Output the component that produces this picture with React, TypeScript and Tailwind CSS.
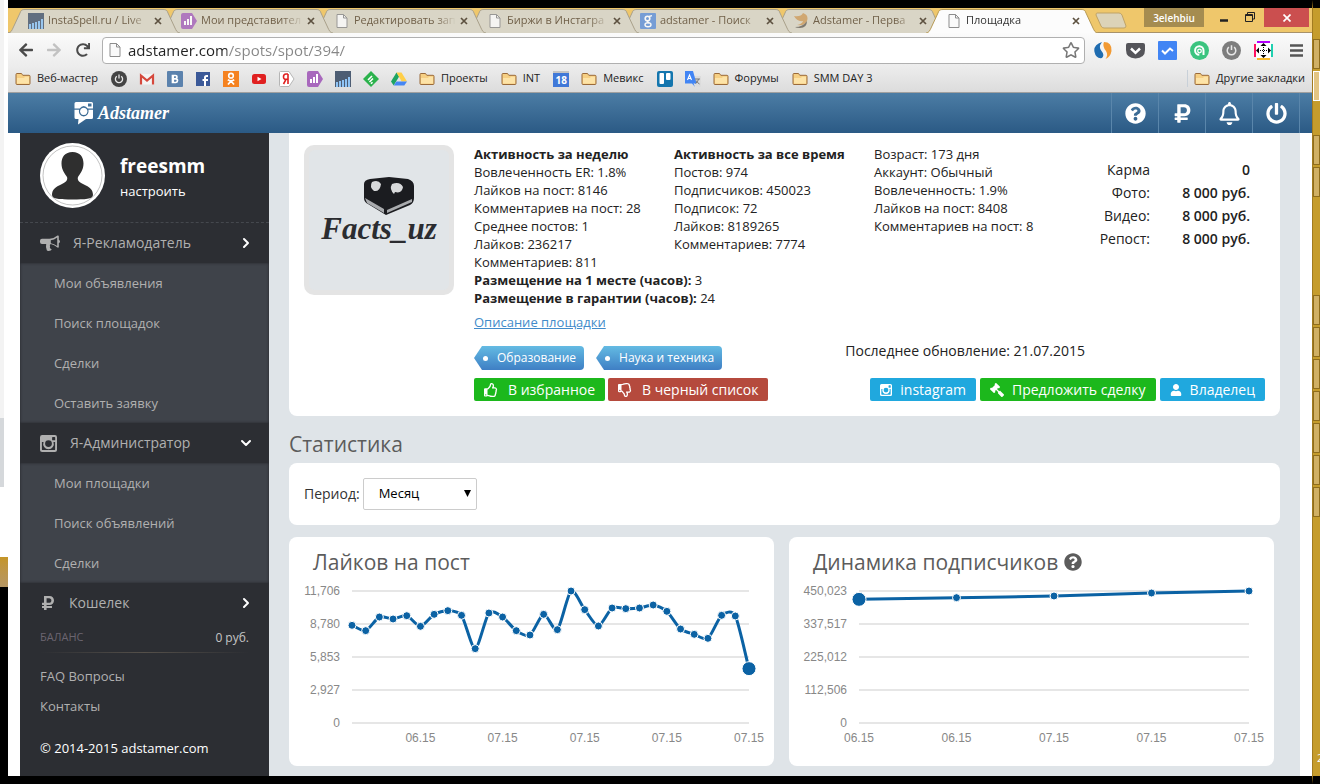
import React from "react";
import {
  FaQuestionCircle,
  FaRubleSign,
  FaRegBell,
  FaPowerOff,
  FaRegThumbsUp,
  FaRegThumbsDown,
  FaGavel,
  FaUser,
  FaArrowLeft,
  FaArrowRight,
  FaRedo,
  FaRegStar,
} from "react-icons/fa";
import { ChevronDown, ChevronRight } from "lucide-react";

/* ---------- small icons ---------- */

const DocIcon = () => (
  <svg viewBox="0 0 16 16" className="size-4 shrink-0">
    <path d="M3 1.500h6.500l3.500 3.500v9.500h-10z" fill="#fafafa" stroke="#8d8d8d" />
    <path d="M9.500 1.500v3.500h3.500" fill="none" stroke="#8d8d8d" />
  </svg>
);

const FolderIcon = () => (
  <svg viewBox="0 0 16 16" className="size-4 shrink-0">
    <path
      d="M1 12.500V3.500q0-1 1-1h4q1 0 1.300 1l.5.800H14q1 0 1 1v7.200q0 1-1 1H2q-1 0-1-1z"
      fill="#f6cf83"
      stroke="#9a6a3a"
    />
    <path d="M2 7h7l1-1.300h4v6.800H2z" fill="#fde3a7" />
  </svg>
);

const BarsIcon = () => (
  <svg viewBox="0 0 16 16" className="size-4 shrink-0">
    <rect width="16" height="16" fill="#4d5d73" />
    <path
      d="M1 16v-5h2v5zM4 16v-6h2v6zM7 16v-7h2v7zM10 16v-8h2v8zM13 16V6h2v10z"
      fill="#8fc4f5"
    />
  </svg>
);

const MetrikaIcon = () => (
  <svg viewBox="0 0 16 16" className="size-4 shrink-0">
    <path d="M2 0h9l5 8-5 8H2q-2 0-2-2V2q0-2 2-2z" fill="#a868bd" />
    <path d="M3 12V8h2v4zM6 12V6h2v6zM9 12V3h2v9z" fill="#fff" />
  </svg>
);

const GoogleIcon = () => (
  <svg viewBox="0 0 16 16" className="size-4 shrink-0">
    <rect width="16" height="16" rx="1" fill="#6594d8" />
    <circle cx="7.500" cy="5.500" r="2.300" fill="none" stroke="#fff" strokeWidth="1.600" />
    <ellipse cx="8" cy="11.800" rx="3" ry="2" fill="none" stroke="#fff" strokeWidth="1.400" />
    <path d="M9 3.500l3-.8M7 8l2 2" stroke="#fff" strokeWidth="1.300" />
  </svg>
);

const WingIcon = () => (
  <svg viewBox="0 0 16 16" className="size-4 shrink-0">
    <path d="M1 3q7 1 9-3 6 2 4 8-2 5-10 4 5-1 6-4-6 1-9-5z" fill="#cf9f63" />
    <path d="M2 14q8 0 12-6 0 7-7 7-4 0-5-1z" fill="#6f6a62" />
  </svg>
);

const PowerDot = ({ fill, className }: { fill: string; className: string }) => (
  <svg viewBox="0 0 16 16" className={className}>
    <circle cx="8" cy="8" r="8" fill={fill} />
    <path
      d="M5.800 5.200a3.600 3.600 0 1 0 4.400 0M8 3.500v4"
      fill="none"
      stroke="#e8e8e8"
      strokeWidth="1.300"
    />
  </svg>
);

const GmailIcon = () => (
  <svg viewBox="0 0 16 16" className="size-4 shrink-0">
    <rect x="1" y="3" width="14" height="10.500" fill="#f4f4f4" />
    <path d="M2 13.500V4.500L8 9.500l6-5v9" fill="none" stroke="#d5483c" strokeWidth="2.200" />
  </svg>
);

const VkIcon = () => (
  <svg viewBox="0 0 16 16" className="size-4 shrink-0">
    <rect width="16" height="16" rx="1" fill="#5b82ad" />
    <path
      d="M5.500 4.500h3q1.500 0 1.500 1.600T8.500 7.800h-3zM5.500 7.800h3.300q1.700 0 1.700 1.800t-1.700 1.900H5.500zM6.200 4.500v7"
      fill="none"
      stroke="#fff"
      strokeWidth="1.700"
    />
  </svg>
);

const FacebookIcon = () => (
  <svg viewBox="0 0 16 16" className="size-4 shrink-0">
    <rect x="1" y="1" width="14" height="14" fill="#3b5998" />
    <path d="M13 5h-1.500Q10 5 10 6.500V15M7.500 9H13" fill="none" stroke="#fff" strokeWidth="2" />
  </svg>
);

const OkIcon = () => (
  <svg viewBox="0 0 16 16" className="size-4 shrink-0">
    <rect width="16" height="16" fill="#f58220" />
    <circle cx="8" cy="4.700" r="2.300" fill="none" stroke="#fff" strokeWidth="1.600" />
    <path d="M4.800 8.800q3.200 2 6.400 0M8 10l-3 3.500M8 10l3 3.500" fill="none" stroke="#fff" strokeWidth="1.800" />
  </svg>
);

const YoutubeIcon = () => (
  <svg viewBox="0 0 16 16" className="size-4 shrink-0">
    <rect x="1" y="3" width="14" height="10" rx="2.500" fill="#e02020" />
    <path d="M6.500 5.700v4.600L10.500 8z" fill="#fff" />
  </svg>
);

const YandexIcon = () => (
  <svg viewBox="0 0 16 16" className="size-4 shrink-0">
    <path d="M1.500.5H10l5 7.500-5 7.500H1.500q-1 0-1-1v-13q0-1 1-1z" fill="#fff" stroke="#b5b5b5" />
    <path d="M9 3v10M9 3H7Q4.500 3 4.500 5.700T7 8.300h2M7 8.300L4.500 13" fill="none" stroke="#e02020" strokeWidth="1.600" />
  </svg>
);

const FeedlyIcon = () => (
  <svg viewBox="0 0 16 16" className="size-4 shrink-0">
    <path d="M8 0l8 8-8 8-8-8z" fill="#2bb24c" />
    <path d="M5 9l4-4M6.500 11l3.500-3.500M8 12.700l1.500-1.500" stroke="#fff" strokeWidth="1.600" />
  </svg>
);

const DriveIcon = () => (
  <svg viewBox="0 0 16 16" className="size-4 shrink-0">
    <path d="M5.500 1.500L0 10.500l2.700 4 5.400-9z" fill="#1da462" />
    <path d="M5.500 1.500h5L16 10.500h-5.300z" fill="#ffcf48" />
    <path d="M5.500 10.500H16l-2.700 4H2.700z" fill="#4687f4" />
  </svg>
);

const CalendarIcon = () => (
  <span className="flex size-4 items-center justify-center border-t-2 border-[#c4c4c4] bg-[#3f78d8] text-[10px] leading-3 font-bold text-white">
    18
  </span>
);

const TrelloIcon = () => (
  <svg viewBox="0 0 16 16" className="size-4 shrink-0">
    <rect width="16" height="16" rx="2" fill="#1476ae" />
    <rect x="2.500" y="2" width="4.500" height="11" rx="1" fill="#fff" />
    <rect x="9" y="2" width="4.500" height="7" rx="1" fill="#fff" />
  </svg>
);

const TranslateIcon = () => (
  <svg viewBox="0 0 16 16" className="size-4 shrink-0">
    <path d="M7 5h9v11h-5z" fill="#dcdcdc" />
    <path d="M0 0h8l3.500 12.500H8.500L10 16l-3-3.500H0z" fill="#4285f4" />
    <path d="M2.500 9L4.500 4l2 5M3 7.500h3" fill="none" stroke="#fff" strokeWidth="1.100" />
    <path d="M10 8h5M13.500 8q-.5 3-3 4.500M11 9.500q1 2 3.500 3.500" fill="none" stroke="#777" />
  </svg>
);

// old square instagram camera
const CameraIcon = ({ className }: { className: string }) => (
  <svg viewBox="0 0 16 16" className={className} fill="currentColor">
    <path
      fillRule="evenodd"
      d="M2 0h12q2 0 2 2v12q0 2-2 2H2q-2 0-2-2V2q0-2 2-2zM12 1.800q-.6 0-.6.600v2q0 .6.6.600h1.700q.6 0 .6-.6v-2q0-.6-.6-.6zM1.800 6.700v6.700q0 .8.8.800h10.800q.8 0 .8-.8V6.700h-1.500a5 5 0 1 1-9.400 0zM8 4.900a3.200 3.200 0 1 0 0 6.400 3.200 3.200 0 1 0 0-6.400z"
    />
  </svg>
);

const BullhornIcon = () => (
  <svg viewBox="0 0 20 17" className="h-[17px] w-5 shrink-0" fill="currentColor">
    <path
      fillRule="evenodd"
      d="M2 3.800h7.500Q14 3.600 17.500.5q1.300-.4 1.300.8v3.500q1.200.4 1.200 1.700t-1.200 1.700v3.600q0 1.200-1.300.8-3.300-3-6.800-3.500-1.400.8-.7 2 .3.800-.2 1.500.6 1.300 2 2-.8 1.500-3.300 1.400-1.500-.1-1.700-.8Q5.500 12 6.200 9.100H2Q0 9.100 0 7.100V5.800q0-2 2-2zM10.800 5.200v3Q14 8.700 17.200 10.900V2.400Q14 4.800 10.800 5.200z"
    />
  </svg>
);

/* ---------- browser chrome ---------- */

interface BrowserTab {
  title: string;
  icon: React.ReactNode;
  layer: string;
}

const tabs: BrowserTab[] = [
  { title: "InstaSpell.ru / Live", icon: <BarsIcon />, layer: "z-6" },
  { title: "Мои представител", icon: <MetrikaIcon />, layer: "z-5" },
  { title: "Редактировать зап", icon: <DocIcon />, layer: "z-4" },
  { title: "Биржи в Инстагра", icon: <DocIcon />, layer: "z-3" },
  { title: "adstamer - Поиск", icon: <GoogleIcon />, layer: "z-2" },
  { title: "Adstamer - Перва", icon: <WingIcon />, layer: "z-1" },
  { title: "Площадка", icon: <DocIcon />, layer: "z-7" },
];

const Tab = ({ tab, active }: { tab: BrowserTab; active: boolean }) => (
  <div
    className={`relative -mr-[19px] flex h-[25px] w-[172px] shrink-0 items-center pl-5 ${tab.layer}`}
  >
    <svg viewBox="0 0 172 25" className="absolute inset-0 size-full">
      <path
        d="M0 25C3 25 4 22 5 20L12 5C13 2 14 1.500 17 1.500H155C158 1.500 159 2 160 5L167 20C168 22 169 25 172 25"
        fill={active ? "#fcfcfc" : "#d9d5c6"}
        stroke={active ? "#b79a55" : "#a9a08a"}
      />
    </svg>
    <a
      href="#"
      className={`relative flex min-w-0 items-center gap-1 text-[11px] ${
        active ? "text-[#333]" : "text-[#71614a] [&_svg]:opacity-85"
      }`}
    >
      {tab.icon}
      <span className="w-[102px] whitespace-nowrap [mask-image:linear-gradient(to_right,black_80%,transparent)]">
        {tab.title}
      </span>
    </a>
    <button aria-label="Закрыть вкладку" className="relative p-1">
      <svg viewBox="0 0 8 8" className="size-2">
        <path d="M1 1l6 6M7 1L1 7" stroke="#5d5140" strokeWidth="1.700" />
      </svg>
    </button>
  </div>
);

const WindowTitleBar = () => (
  <div className="flex h-[25px] items-start border-b border-[#a8926a] bg-[#efc76b]">
    {tabs.map((tab, i) => (
      <Tab key={tab.title} tab={tab} active={i === tabs.length - 1} />
    ))}
    <button aria-label="Новая вкладка" className="mt-1 ml-4">
      <svg viewBox="0 0 32 17" className="h-[17px] w-8">
        <path
          d="M2 1H24Q26 1 27 3L31 14Q31 16 29 16H9Q7 16 6 14L1 3Q1 1 2 1z"
          fill="#dcd3b8"
          stroke="#bfa367"
        />
      </svg>
    </button>
    <div className="ml-auto flex items-start">
      <button className="h-[19px] w-[60px] bg-[#a58c50] text-[10px] leading-[18px] font-semibold text-white">
        3elehbiu
      </button>
      <button aria-label="Свернуть" className="ml-3 p-1">
        <svg viewBox="0 0 8 12" className="h-3 w-2">
          <path d="M0 8.500h8" stroke="#222" strokeWidth="2.500" />
        </svg>
      </button>
      <button aria-label="Развернуть" className="ml-[13px] py-1">
        <svg viewBox="0 0 10 10" className="size-[10px]" fill="none" stroke="#222">
          <path d="M2.500 2V.5h7v6.500H8M.500 2.500h7v7h-7zM.5 3.500h7" />
        </svg>
      </button>
      <button
        aria-label="Закрыть"
        className="mr-[3px] ml-[9px] flex h-[19px] w-[45px] items-center justify-center bg-[#cb4f4f]"
      >
        <svg viewBox="0 0 8 8" className="size-2">
          <path d="M.5.500l7 7M7.500.5l-7 7" stroke="#fff" strokeWidth="1.700" />
        </svg>
      </button>
    </div>
  </div>
);

const Toolbar = () => (
  <div className="flex h-[34px] items-center bg-linear-to-b from-[#fbfbfb] to-[#ececec] pr-[5px] pl-[10px]">
    <button aria-label="Назад" className="text-[#4a4a4a]">
      <FaArrowLeft size={16} />
    </button>
    <button aria-label="Вперёд" className="ml-3 text-[#c2c2c2]">
      <FaArrowRight size={16} />
    </button>
    <button aria-label="Обновить" className="ml-[14px] text-[#4a4a4a]">
      <FaRedo size={14} />
    </button>
    <div className="ml-3 flex h-[27px] flex-1 items-center rounded-sm border border-[#b0b0b0] bg-white px-1">
      <DocIcon />
      <label htmlFor="address" className="sr-only">
        Адрес
      </label>
      <div className="ml-[5px] flex flex-1 text-[15px] leading-5">
        <input
          id="address"
          defaultValue="adstamer.com/spots/spot/394/"
          className="w-full bg-transparent bg-linear-to-r from-[#222] from-[99px] to-[#868686] to-[99px] bg-clip-text text-transparent outline-none"
        />
      </div>
      <button aria-label="В закладки" className="text-[#777]">
        <FaRegStar size={18} />
      </button>
    </div>
    <div className="ml-[9px] flex items-center gap-[13px]">
      <svg viewBox="0 0 19 19" className="size-[19px]">
        <path d="M8 1Q-1 4 .5 11T8 17q3-3-.5-7T8 1z" fill="#1f6cb0" />
        <path d="M10 1q8 0 7.500 9-1 6-6 8 3-4 .5-8-4-5-2-9z" fill="#f29a33" />
      </svg>
      <svg viewBox="0 0 19 19" className="size-[19px]">
        <path d="M2 2h15q2 0 2 2v5q0 8-9.500 8.500Q0 17 0 9V4q0-2 2-2z" fill="#55555a" />
        <path d="M5 7.500l4.500 4.300L14 7.500" fill="none" stroke="#fff" strokeWidth="2.500" />
      </svg>
      <svg viewBox="0 0 19 19" className="size-[19px]">
        <rect width="19" height="19" rx="1" fill="#4285f4" />
        <path d="M4 9.500l3 3 5-5 3 2.500" fill="none" stroke="#fff" strokeWidth="2" />
      </svg>
      <svg viewBox="0 0 19 19" className="size-[19px]">
        <circle cx="9.500" cy="9.500" r="9.500" fill="#3bc47f" />
        <path d="M13.500 14V9.500a4.200 4.200 0 1 0-4.200 4.200" fill="none" stroke="#fff" strokeWidth="2" />
        <circle cx="9.500" cy="10" r="1.800" fill="none" stroke="#fff" strokeWidth="1.300" />
      </svg>
      <PowerDot fill="#7d7d7d" className="size-[19px]" />
      <svg viewBox="0 0 19 19" className="size-[19px]">
        <rect x="2" y="2" width="15" height="15" fill="#fff" />
        <path d="M3 1h13" stroke="#b400ff" strokeWidth="2" />
        <path d="M3 18h13" stroke="#f6b92b" strokeWidth="2" />
        <path d="M1 3v13" stroke="#ff1060" strokeWidth="2" />
        <path d="M18 3v13" stroke="#1fd0b0" strokeWidth="2" />
        <path d="M9.500 4v11M4 9.500h11" stroke="#000" strokeDasharray="1 1" />
        <path d="M9.500 2l3 3h-6zM9.500 17l3-3h-6zM2 9.500l3-3v6zM17 9.500l-3-3v6z" />
      </svg>
      <button aria-label="Меню">
        <svg viewBox="0 0 13 13" className="mx-1 size-[13px]">
          <path d="M0 1.500h13M0 6.500h13M0 11.500h13" stroke="#555" strokeWidth="2.600" />
        </svg>
      </button>
    </div>
  </div>
);

const bookmarks: { title: string; label?: string; icon: React.ReactNode }[] = [
  { title: "Веб-мастер", label: "Веб-мастер", icon: <FolderIcon /> },
  { title: "Power", icon: <PowerDot fill="#444" className="size-4" /> },
  { title: "Gmail", icon: <GmailIcon /> },
  { title: "ВКонтакте", icon: <VkIcon /> },
  { title: "Facebook", icon: <FacebookIcon /> },
  { title: "Одноклассники", icon: <OkIcon /> },
  { title: "YouTube", icon: <YoutubeIcon /> },
  { title: "Яндекс", icon: <YandexIcon /> },
  { title: "Метрика", icon: <MetrikaIcon /> },
  { title: "InstaSpell", icon: <BarsIcon /> },
  { title: "Feedly", icon: <FeedlyIcon /> },
  { title: "Диск", icon: <DriveIcon /> },
  { title: "Проекты", label: "Проекты", icon: <FolderIcon /> },
  { title: "INT", label: "INT", icon: <FolderIcon /> },
  { title: "Календарь", icon: <CalendarIcon /> },
  { title: "Мевикс", label: "Мевикс", icon: <FolderIcon /> },
  { title: "Trello", icon: <TrelloIcon /> },
  { title: "Переводчик", icon: <TranslateIcon /> },
  { title: "Форумы", label: "Форумы", icon: <FolderIcon /> },
  { title: "SMM DAY 3", label: "SMM DAY 3", icon: <FolderIcon /> },
];

const BookmarksBar = () => (
  <div className="flex h-[26px] items-center gap-3 border-b border-[#a0a0a0] bg-linear-to-b from-[#ececec] to-[#dcdcdc] px-[7px] pb-[2px] text-[11px] whitespace-nowrap text-[#222]">
    {bookmarks.map((b) => (
      <a key={b.title} href="#" aria-label={b.title} className="flex items-center gap-[6px]">
        {b.icon}
        {b.label && <span className="pr-px">{b.label}</span>}
      </a>
    ))}
    <a href="#" className="ml-auto flex items-center gap-[6px] border-l border-[#c8d0d8] pl-[6px]">
      <FolderIcon />
      Другие закладки
    </a>
  </div>
);

/* ---------- site ---------- */

const headerLinks = [
  { title: "Помощь", icon: <FaQuestionCircle size={21} /> },
  { title: "Кошелек", icon: <FaRubleSign size={21} /> },
  { title: "Уведомления", icon: <FaRegBell size={23} /> },
  { title: "Выход", icon: <FaPowerOff size={21} /> },
];

const SiteHeader = () => (
  <header className="flex h-10 items-stretch bg-linear-to-b from-[#4c7da5] to-[#2b5a85] pr-3">
    <a href="#" className="ml-[66px] flex items-center gap-1 text-white">
      <svg viewBox="0 0 20 24" className="h-6 w-5">
        <path
          fillRule="evenodd"
          fill="#fff"
          d="M2 1h15.500q1.500 0 1.500 1.500v14q0 1.500-1.500 1.500H12l-8 5.500.500-5.500H2Q.500 18 .5 16.500v-14Q.5 1 2 1zM14 2.500v3h3.500v-3zM.5 7.500v1.300H5q-1 6 4.700 6.700 5.600-.700 4.800-6.700H19V7.500h-5.200Q12 5 9.700 5T5.700 7.500zM9.700 6.700a3.700 3.700 0 1 0 .1 0z"
        />
      </svg>
      <span className="font-[Liberation_Serif,serif] text-lg font-bold italic">Adstamer</span>
    </a>
    <nav className="ml-auto flex border-r border-[#5a86ab]">
      {headerLinks.map((link) => (
        <a
          key={link.title}
          href="#"
          aria-label={link.title}
          className="flex w-[47px] items-center justify-center border-l border-[#5a86ab] text-white"
        >
          {link.icon}
        </a>
      ))}
    </nav>
  </header>
);

interface MenuSectionProps {
  title: string;
  icon: React.ReactNode;
  open?: boolean;
  items: string[];
}

const MenuSection: React.FC<MenuSectionProps> = ({ title, icon, open, items }) => (
  <div>
    <button className="flex h-10 w-full items-center gap-[13px] pr-[15px] pl-5 text-sm">
      {icon}
      {title}
      <span className="ml-auto text-white">
        {open ? (
          <ChevronDown size={16} strokeWidth={3} />
        ) : (
          <ChevronRight size={16} strokeWidth={3} />
        )}
      </span>
    </button>
    {items.length > 0 && (
      <ul className="bg-[#3f434a] shadow-[inset_0_0_3px_#25272b]">
        {items.map((item) => (
          <li key={item}>
            <a href="#" className="block h-10 pl-[34px] text-[13px] leading-10">
              {item}
            </a>
          </li>
        ))}
      </ul>
    )}
  </div>
);

const Sidebar = () => (
  <aside className="w-[249px] shrink-0 bg-[#2c2e33] text-[#b0b0b0]">
    <div className="flex h-[90px] items-center gap-[15px] border-b border-dashed border-[#45484e] px-5 pb-1 text-white">
      <svg viewBox="0 0 65 65" className="size-[65px]">
        <circle cx="32.500" cy="32.500" r="32.500" fill="#fff" />
        <circle cx="32.500" cy="32.500" r="29.500" fill="none" stroke="#999" strokeWidth=".6" />
        <path
          d="M32.500 9C25 9 21.500 14 21.500 20.500 21.500 27 25 31 27 34 28 37 26 39 22 41 15 44 12 47 12 52 12 56 20 56.500 32.500 56.500S53 56 53 52C53 47 50 44 43 41 39 39 37 37 38 34 40 31 43.500 27 43.500 20.500 43.500 14 40 9 32.500 9z"
          fill="#2f2f2f"
        />
      </svg>
      <div className="pt-1">
        <div className="text-[19px] leading-6 font-bold">freesmm</div>
        <a href="#" className="text-[13px] leading-5">
          настроить
        </a>
      </div>
    </div>
    <MenuSection
      title="Я-Рекламодатель"
      icon={<BullhornIcon />}
      items={["Мои объявления", "Поиск площадок", "Сделки", "Оставить заявку"]}
    />
    <MenuSection
      title="Я-Администратор"
      icon={<CameraIcon className="size-[17px]" />}
      open
      items={["Мои площадки", "Поиск объявлений", "Сделки"]}
    />
    <MenuSection title="Кошелек" icon={<FaRubleSign size={16} />} items={[]} />
    <div className="px-5">
      <div className="flex h-[29px] items-center justify-between">
        <span className="text-[11px] text-[#6b6570]">БАЛАНС</span>
        <span className="text-xs text-[#c5c5c5]">0 руб.</span>
      </div>
      <div className="h-px bg-linear-to-r from-transparent via-[#55504a] to-transparent" />
    </div>
    <div className="flex flex-col px-5 pt-2 text-[13px] leading-[30px]">
      <a href="#">FAQ Вопросы</a>
      <a href="#">Контакты</a>
      <p className="mt-3 text-white">© 2014-2015 adstamer.com</p>
    </div>
  </aside>
);

const weekStats = [
  "Вовлеченность ER: 1.8%",
  "Лайков на пост: 8146",
  "Комментариев на пост: 28",
  "Среднее постов: 1",
  "Лайков: 236217",
  "Комментариев: 811",
];

const totalStats = [
  "Постов: 974",
  "Подписчиков: 450023",
  "Подписок: 72",
  "Лайков: 8189265",
  "Комментариев: 7774",
];

const accountStats = [
  "Возраст: 173 дня",
  "Аккаунт: Обычный",
  "Вовлеченность: 1.9%",
  "Лайков на пост: 8408",
  "Комментариев на пост: 8",
];

const prices = [
  ["Карма", "0"],
  ["Фото:", "8 000 руб."],
  ["Видео:", "8 000 руб."],
  ["Репост:", "8 000 руб."],
];

const StatColumn = ({ title, lines }: { title?: string; lines: string[] }) => (
  <div className="w-[200px]">
    {title && <h3 className="font-bold whitespace-nowrap">{title}</h3>}
    {lines.map((line) => (
      <p key={line}>{line}</p>
    ))}
  </div>
);

const SpotAvatar = () => (
  <svg viewBox="0 0 150 150" className="size-[150px] shrink-0">
    <rect width="150" height="150" rx="10" fill="#e4e4e4" />
    <rect x="5" y="5" width="140" height="140" rx="6" fill="#e1e5e8" />
    <path d="M60 39Q60 35 66 34L85 32 104 34Q110 36 110 41V53Q110 58 106 60L82 70 64 59Q60 57 60 53z" fill="#1b1c20" />
    <path d="M61 53L80 64V68L63 58zM83 65L108 54V57L83 68z" fill="#a9abae" />
    <path d="M68 37q6-3 9 2-1 8-7 7-5-4-2-9zM88 39q8-3 11 3-1 7-8 5l-1 2q-5-5-2-10z" fill="#d8d9db" />
    <text
      x="75"
      y="94"
      textAnchor="middle"
      className="font-[Liberation_Serif,serif] text-[31px] font-bold italic"
      fill="#2b2c30"
    >
      Facts_uz
    </text>
  </svg>
);

const Tag = ({ children }: { children: React.ReactNode }) => (
  <a
    href="#"
    className="flex h-6 items-center gap-[9px] rounded-sm bg-linear-to-b from-[#64bbe3] to-[#3f7fc4] pr-2 pl-[9px] text-xs text-white [clip-path:polygon(8px_0,100%_0,100%_100%,8px_100%,0_50%)]"
  >
    <span className="size-[5px] rounded-full bg-white" />
    {children}
  </a>
);

const ActionButton = ({
  color,
  icon,
  children,
}: {
  color: string;
  icon: React.ReactNode;
  children: React.ReactNode;
}) => (
  <button
    className={`flex h-[23px] items-center gap-2 rounded-xs px-[10px] text-sm whitespace-nowrap text-white ${color}`}
  >
    {icon}
    {children}
  </button>
);

const SpotPanel = () => (
  <section className="flex gap-5 rounded-b-lg bg-white px-[15px] pt-3 pb-[15px] text-[#222]">
    <SpotAvatar />
    <div className="min-w-0 flex-1">
      <div className="flex text-[13px] leading-[18px]">
        <StatColumn title="Активность за неделю" lines={weekStats} />
        <StatColumn title="Активность за все время" lines={totalStats} />
        <StatColumn lines={accountStats} />
        <table className="mt-[13px] mr-[15px] ml-auto h-fit text-sm leading-[23px] whitespace-nowrap">
          <tbody>
            {prices.map(([label, value]) => (
              <tr key={label} className="text-right">
                <th className="font-normal">{label}</th>
                <td className="w-[100px] font-semibold">{value}</td>
              </tr>
            ))}
          </tbody>
        </table>
      </div>
      <div className="text-[13px] leading-[18px]">
        <p>
          <b>Размещение на 1 месте (часов):</b> 3
        </p>
        <p>
          <b>Размещение в гарантии (часов):</b> 24
        </p>
        <a href="#" className="mt-[6px] inline-block text-[#428bca] underline">
          Описание площадки
        </a>
      </div>
      <div className="mt-[15px] flex justify-between">
        <div className="flex gap-3">
          <Tag>Образование</Tag>
          <Tag>Наука и техника</Tag>
        </div>
        <p className="mr-[180px] text-sm leading-[10px]">Последнее обновление: 21.07.2015</p>
      </div>
      <div className="mt-2 flex justify-between">
        <div className="flex gap-[3px]">
          <ActionButton color="bg-[#1cb81c]" icon={<FaRegThumbsUp className="mr-[2px]" />}>
            В избранное
          </ActionButton>
          <ActionButton color="bg-[#b54a3d]" icon={<FaRegThumbsDown className="mr-[2px]" />}>
            В черный список
          </ActionButton>
        </div>
        <div className="flex gap-1">
          <ActionButton color="bg-[#20a8de]" icon={<CameraIcon className="size-3" />}>
            instagram
          </ActionButton>
          <ActionButton color="bg-[#1cb81c]" icon={<FaGavel className="-scale-x-100" />}>
            Предложить сделку
          </ActionButton>
          <ActionButton color="bg-[#20a8de]" icon={<FaUser size={12} />}>
            Владелец
          </ActionButton>
        </div>
      </div>
    </div>
  </section>
);

/* ---------- charts ---------- */

interface LineChartProps {
  values: number[];
  max: number;
  yLabels: string[];
  xLabels: { index: number; text: string }[];
  left: number;
  highlighted: number;
}

const likes = [
  8661, 8188, 9400, 9223, 9518, 8572, 9636, 9962, 9548, 6592, 9755, 9400, 8188,
  7804, 9636, 8277, 11706, 10051, 8602, 10198, 10139, 10198, 10464, 9903, 8336,
  7863, 7508, 9548, 9489, 4818,
];

const followers = [421606, 427286, 432970, 443200, 450023];

const LineChart: React.FC<LineChartProps> = ({
  values,
  max,
  yLabels,
  xLabels,
  left,
  highlighted,
}) => {
  const right = 450;
  const top = 9;
  const height = 132;
  const step = (right - left) / (values.length - 1);
  const pts = values.map((v, i) => ({
    x: left + i * step,
    y: top + height - (v / max) * height,
  }));

  const slope = (i: number) => {
    const a = pts[Math.max(i - 1, 0)];
    const b = pts[Math.min(i + 1, pts.length - 1)];
    return (b.y - a.y) / (b.x - a.x);
  };

  let path = `M${pts[0].x} ${pts[0].y}`;
  for (let i = 1; i < pts.length; i++) {
    const p = pts[i - 1];
    const q = pts[i];
    const ix = step / 4;
    path += `C${p.x + ix} ${p.y + ix * slope(i - 1)} ${q.x - ix} ${q.y - ix * slope(i)} ${q.x} ${q.y}`;
  }

  return (
    <svg
      viewBox="0 0 465 170"
      className="w-full overflow-visible font-[Liberation_Sans,Arial,sans-serif] text-xs"
    >
      {yLabels.map((label, i) => (
        <g key={label}>
          <path d={`M${left} ${top + i * 33}H${right}`} stroke="#e6e6e6" strokeWidth="2" />
          <text x={left - 12} y={top + i * 33 + 4} textAnchor="end" fill="#888">
            {label}
          </text>
        </g>
      ))}
      {xLabels.map(({ index, text }) => (
        <text key={index} x={pts[index].x} y="160" textAnchor="middle" fill="#888">
          {text}
        </text>
      ))}
      <path d={path} fill="none" stroke="#0b62a4" strokeWidth="3" />
      {pts.map((p, i) => (
        <circle
          key={i}
          cx={p.x}
          cy={p.y}
          r={i === highlighted ? 7 : 4}
          fill="#0b62a4"
          stroke="#fff"
        />
      ))}
    </svg>
  );
};

const Statistics = () => (
  <section>
    <h2 className="mt-3 mb-[3px] text-[21px] leading-8 text-[#5c5c5c]">Статистика</h2>
    <div className="flex h-[62px] items-center gap-[3px] rounded-lg bg-white px-[15px]">
      <label htmlFor="period" className="text-sm text-[#333]">
        Период:
      </label>
      <div className="relative">
        <select
          id="period"
          className="h-8 w-[114px] appearance-none rounded-xs border border-[#ccc] bg-white pl-[15px] text-[13px] text-black"
        >
          <option>Месяц</option>
        </select>
        <svg viewBox="0 0 7 7" className="pointer-events-none absolute top-3 right-[6px] size-[7px]">
          <path d="M0 0h7L3.500 7z" />
        </svg>
      </div>
    </div>
    <div className="mt-3 grid grid-cols-2 gap-[15px] pr-[6px] pb-[10px]">
      <div className="rounded-lg bg-white px-[10px] pt-[9px] pb-[14px]">
        <h2 className="mb-1 pl-[14px] text-[21px] leading-8 text-[#5c5c5c]">Лайков на пост</h2>
        <LineChart
          values={likes}
          max={11706}
          yLabels={["11,706", "8,780", "5,853", "2,927", "0"]}
          xLabels={[
            { index: 5, text: "06.15" },
            { index: 11, text: "07.15" },
            { index: 17, text: "07.15" },
            { index: 23, text: "07.15" },
            { index: 29, text: "07.15" },
          ]}
          left={53}
          highlighted={29}
        />
      </div>
      <div className="rounded-lg bg-white px-[10px] pt-[9px] pb-[14px]">
        <h2 className="mb-1 flex items-center gap-[6px] pl-[14px] text-[21px] leading-8 text-[#5c5c5c]">
          Динамика подписчиков
          <FaQuestionCircle size={18} />
        </h2>
        <LineChart
          values={followers}
          max={450023}
          yLabels={["450,023", "337,517", "225,012", "112,506", "0"]}
          xLabels={[
            { index: 0, text: "06.15" },
            { index: 1, text: "06.15" },
            { index: 2, text: "07.15" },
            { index: 3, text: "07.15" },
            { index: 4, text: "07.15" },
          ]}
          left={60}
          highlighted={0}
        />
      </div>
    </div>
  </section>
);

/* ---------- desktop edges ---------- */

const DesktopLeft = () => (
  <div className="w-2 shrink-0 bg-black">
    <div className="h-[418px] border-r-4 border-white bg-[#f3f3f3]" />
    <div className="h-[69px] border-r-4 border-white bg-[#d5d8db]" />
    <div className="h-[70px] bg-white" />
    <div className="h-[30px] bg-linear-to-b from-[#c49526] to-[#b59663]" />
  </div>
);

const TaskTile = () => <div className="h-[30px] border border-[#8f6d1c] bg-[#d0b064]" />;

const DesktopRight = () => (
  <div className="flex w-2 shrink-0 flex-col gap-[2px] overflow-hidden border-y-8 border-l border-y-black border-l-[#a27b1f] bg-[#c59c2c] pt-[31px]">
    <TaskTile />
    <div className="h-[30px] border border-white bg-[#e3c583]" />
    <div className="mt-8">
      <TaskTile />
    </div>
    <TaskTile />
    <div className="mt-24">
      <TaskTile />
    </div>
    {[1, 2, 3, 4, 5, 6].map((n) => (
      <TaskTile key={n} />
    ))}
    <span className="mt-auto mb-2 ml-1 text-[11px] leading-5 text-white">2</span>
  </div>
);

const App = () => (
  <div className="flex min-h-screen font-['Open_Sans',sans-serif]">
    <DesktopLeft />
    <div className="flex min-w-0 flex-1 flex-col border-y-8 border-black bg-white">
      <WindowTitleBar />
      <Toolbar />
      <BookmarksBar />
      <SiteHeader />
      <div className="flex flex-1 px-3">
        <Sidebar />
        <main className="min-w-0 flex-1 bg-[#dfe4e8] pr-5 pl-5">
          <SpotPanel />
          <Statistics />
        </main>
      </div>
    </div>
    <DesktopRight />
  </div>
);

export default App;
